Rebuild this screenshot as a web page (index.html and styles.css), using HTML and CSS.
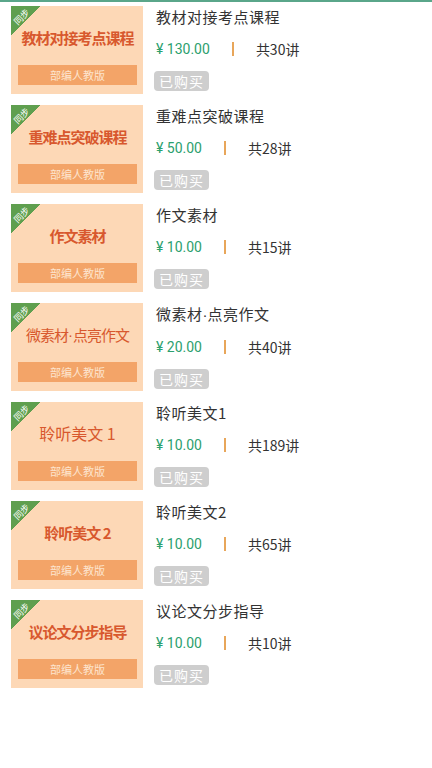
FILE: index.html
```html
<!DOCTYPE html>
<html>
<head>
    <meta charset="utf-8">
    <title>课程列表</title>
    <link rel="stylesheet" href="styles.css">
</head>
<body>
    <div class="top-line"></div>

    <div class="course-list">
        <div class="course">
            <div class="thumb">
                <div class="tag"><span>同步</span></div>
                <div class="thumb-title bold">教材对接考点课程</div>
                <div class="edition">部编人教版</div>
            </div>
            <div class="info">
                <div class="name">教材对接考点课程</div>
                <div class="meta">
                    <span class="price">¥ 130.00</span>
                    <span class="divider"></span>
                    <span class="count">共30讲</span>
                </div>
                <span class="bought">已购买</span>
            </div>
        </div>

        <div class="course">
            <div class="thumb">
                <div class="tag"><span>同步</span></div>
                <div class="thumb-title bold">重难点突破课程</div>
                <div class="edition">部编人教版</div>
            </div>
            <div class="info">
                <div class="name">重难点突破课程</div>
                <div class="meta">
                    <span class="price">¥ 50.00</span>
                    <span class="divider"></span>
                    <span class="count">共28讲</span>
                </div>
                <span class="bought">已购买</span>
            </div>
        </div>

        <div class="course">
            <div class="thumb">
                <div class="tag"><span>同步</span></div>
                <div class="thumb-title bold">作文素材</div>
                <div class="edition">部编人教版</div>
            </div>
            <div class="info">
                <div class="name">作文素材</div>
                <div class="meta">
                    <span class="price">¥ 10.00</span>
                    <span class="divider"></span>
                    <span class="count">共15讲</span>
                </div>
                <span class="bought">已购买</span>
            </div>
        </div>

        <div class="course">
            <div class="thumb">
                <div class="tag"><span>同步</span></div>
                <div class="thumb-title">微素材<span class="dot">·</span>点亮作文</div>
                <div class="edition">部编人教版</div>
            </div>
            <div class="info">
                <div class="name">微素材<span class="dot">·</span>点亮作文</div>
                <div class="meta">
                    <span class="price">¥ 20.00</span>
                    <span class="divider"></span>
                    <span class="count">共40讲</span>
                </div>
                <span class="bought">已购买</span>
            </div>
        </div>

        <div class="course">
            <div class="thumb">
                <div class="tag"><span>同步</span></div>
                <div class="thumb-title large">聆听美文 1</div>
                <div class="edition">部编人教版</div>
            </div>
            <div class="info">
                <div class="name">聆听美文1</div>
                <div class="meta">
                    <span class="price">¥ 10.00</span>
                    <span class="divider"></span>
                    <span class="count">共189讲</span>
                </div>
                <span class="bought">已购买</span>
            </div>
        </div>

        <div class="course">
            <div class="thumb">
                <div class="tag"><span>同步</span></div>
                <div class="thumb-title bold">聆听美文 2</div>
                <div class="edition">部编人教版</div>
            </div>
            <div class="info">
                <div class="name">聆听美文2</div>
                <div class="meta">
                    <span class="price">¥ 10.00</span>
                    <span class="divider"></span>
                    <span class="count">共65讲</span>
                </div>
                <span class="bought">已购买</span>
            </div>
        </div>

        <div class="course">
            <div class="thumb">
                <div class="tag"><span>同步</span></div>
                <div class="thumb-title bold">议论文分步指导</div>
                <div class="edition">部编人教版</div>
            </div>
            <div class="info">
                <div class="name">议论文分步指导</div>
                <div class="meta">
                    <span class="price">¥ 10.00</span>
                    <span class="divider"></span>
                    <span class="count">共10讲</span>
                </div>
                <span class="bought">已购买</span>
            </div>
        </div>
    </div>
</body>
</html>
```

FILE: styles.css
```css
* {
    margin: 0;
    padding: 0;
    box-sizing: border-box;
}
body {
    font-family: 'Noto Sans CJK SC', 'Noto Sans', sans-serif;
    background-color: #fff;
    color: #333;
}
/* Thin green line under the header */
.top-line {
    height: 2px;
    background-color: #5aa68a;
}
.course-list {
    padding: 4px 0 0 11px;
}
.course {
    display: flex;
    height: 88px;
    margin-bottom: 11px;
}
/* Cover picture on the left */
.thumb {
    position: relative;
    width: 132px;
    height: 88px;
    background-color: #fdd8b6;
    display: flex;
    flex-direction: column;
    padding: 0 6px 9px 7px;
}
.tag {
    position: absolute;
    top: 0;
    left: 0;
    width: 30px;
    height: 30px;
    background: linear-gradient(135deg, #5f9f4f 50%, transparent 50%);
}
.tag span {
    position: absolute;
    top: 6px;
    left: 0;
    width: 22px;
    text-align: center;
    font-size: 9px;
    line-height: 10px;
    color: #fff;
    transform: rotate(-45deg);
}
.thumb-title {
    flex: 1;
    display: flex;
    align-items: center;
    justify-content: center;
    padding-top: 3px;
    font-size: 15px;
    color: #d8582e;
    white-space: nowrap;
    letter-spacing: -1px;
}
.thumb-title.bold {
    font-weight: bold;
}
.thumb-title.large {
    font-size: 16px;
    letter-spacing: 0;
}
.dot {
    font-family: 'Liberation Sans', sans-serif;
    letter-spacing: 0;
}
.edition {
    height: 20px;
    line-height: 20px;
    background-color: #f3a468;
    color: #fde4cf;
    font-size: 11px;
    text-align: center;
}
/* Text column */
.info {
    margin-left: 13px;
    display: flex;
    flex-direction: column;
    align-items: flex-start;
}
.name {
    font-size: 15px;
    line-height: 22px;
    color: #333;
    letter-spacing: 0.5px;
}
.meta {
    display: flex;
    align-items: center;
    margin-top: 11px;
    height: 20px;
    font-size: 14px;
}
.price {
    color: #2ca06e;
    font-family: Roboto, 'Noto Sans CJK SC', sans-serif;
}
.divider {
    width: 2px;
    height: 14px;
    background-color: #e8a65a;
    margin: 0 22px;
}
.count {
    color: #333;
}
.bought {
    margin: 12px 0 0 -2px;
    height: 20px;
    line-height: 20px;
    padding: 0 5px;
    border-radius: 4px;
    background-color: #cecece;
    color: #fff;
    font-size: 14px;
    letter-spacing: 1px;
}
```
